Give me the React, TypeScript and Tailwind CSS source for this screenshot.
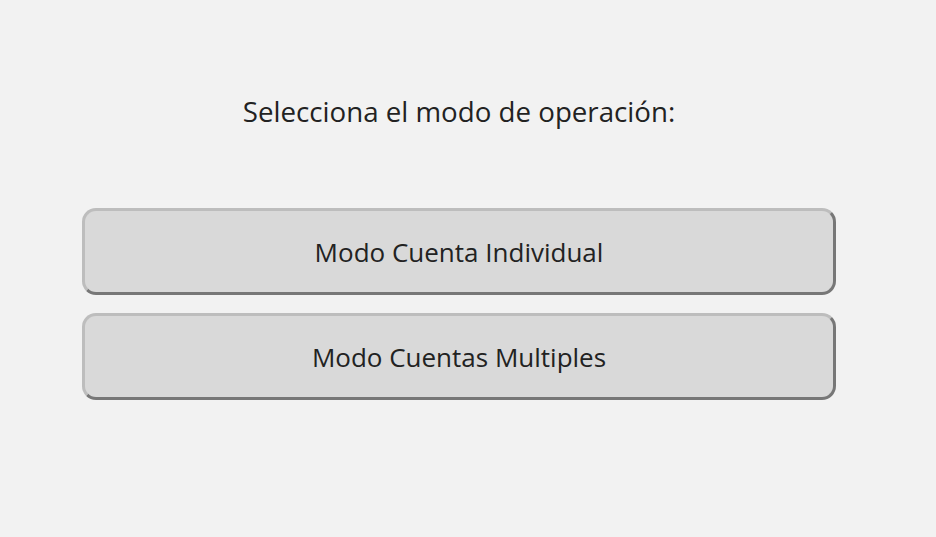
export default function App() {
  const btn =
    "h-[87px] w-full rounded-[14px] border-[3px] border-t-[#bdbdbd] border-l-[#bdbdbd] border-r-[#777777] border-b-[#777777] bg-[#d9d9d9] pt-[2px] text-[26px] font-medium text-[#222222]";
  return (
    <div className="h-[537px] w-[936px] bg-[#f2f2f2] pl-[82px] pr-[100px] font-['Open_Sans',sans-serif]">
      <h1 className="pt-[91px] text-center text-[27.7px] font-medium leading-[40px] text-[#222222]">
        Selecciona el modo de operación:
      </h1>
      <div className="mt-[77px] flex flex-col gap-[18px]">
        <button className={btn}>Modo Cuenta Individual</button>
        <button className={btn}>Modo Cuentas Multiples</button>
      </div>
    </div>
  );
}
